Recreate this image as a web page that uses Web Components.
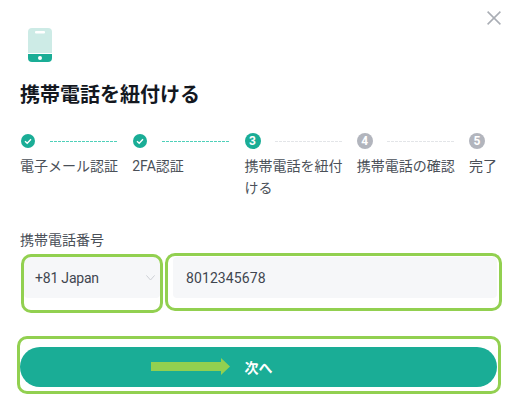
<!DOCTYPE html>
<html lang="ja">
<head>
<meta charset="utf-8">
<style>
  html, body { margin: 0; background: #fff; }
  body { font-family: "Roboto", "Noto Sans CJK JP", sans-serif; color: #3f4650; }
</style>
</head>
<body>
<bind-phone-dialog></bind-phone-dialog>

<script>
class StepItem extends HTMLElement {
  constructor() {
    super();
    this.attachShadow({ mode: "open" });
  }

  connectedCallback() {
    const state = this.getAttribute("state");
    const num = this.getAttribute("num");
    const last = this.hasAttribute("last");
    const mark = state === "done"
      ? `<svg width="14" height="14" viewBox="0 0 14 14"><circle cx="7" cy="7" r="7" fill="#1aad96"/><path d="M4 7.2l2.2 2.1L10 5.3" fill="none" stroke="#fff" stroke-width="1.4"/></svg>`
      : `<span class="num">${num}</span>`;

    this.shadowRoot.innerHTML = `
      <style>
        :host { display: block; width: 112.25px; flex: none; }
        .head { display: flex; align-items: center; height: 16px; gap: 8px; }
        .icon { width: 16px; height: 16px; flex: none; display: flex; align-items: center; justify-content: center; }
        .num {
          width: 16px; height: 16px; border-radius: 50%;
          display: flex; align-items: center; justify-content: center;
          font: 700 12px/16px "Roboto", sans-serif; color: #fff;
          background: #b2b5bd;
        }
        :host([state="active"]) .num { background: #1aad96; }
        .line {
          width: 68px; height: 1px; margin-left: 6px;
          background: repeating-linear-gradient(90deg, #e3e5e8 0 3px, transparent 3px 4px);
        }
        :host([state="done"]) .line {
          background: repeating-linear-gradient(90deg, #4fd0ba 0 3px, transparent 3px 4px);
        }
        .label { margin-top: 6px; width: 100px; font-size: 14px; line-height: 22px; color: #4a5058; }
      </style>
      <div class="head">
        <div class="icon">${mark}</div>
        ${last ? "" : `<div class="line"></div>`}
      </div>
      <div class="label"><slot></slot></div>
    `;
  }
}

class PhoneField extends HTMLElement {
  constructor() {
    super();
    this.attachShadow({ mode: "open" });
  }

  connectedCallback() {
    const chevron = this.hasAttribute("select")
      ? `<svg width="9" height="6" viewBox="0 0 9 6"><path d="M.4.4l4.1 4.6L8.6.4" fill="none" stroke="#cdd0d5" stroke-width="1"/></svg>`
      : "";
    this.shadowRoot.innerHTML = `
      <style>
        :host {
          display: flex; align-items: center; justify-content: space-between;
          height: 41px; box-sizing: border-box; padding: 0 5px 0 11px;
          background: #f6f7f9; border-radius: 4px;
          font-size: 14px; color: #3f4650; letter-spacing: -.2px;
        }
        :host(:not([select])) { padding-left: 13px; letter-spacing: .1px; }
      </style>
      <span><slot></slot></span>${chevron}
    `;
  }
}

class NextButton extends HTMLElement {
  constructor() {
    super();
    this.attachShadow({ mode: "open" });
  }

  connectedCallback() {
    this.shadowRoot.innerHTML = `
      <style>
        :host {
          display: flex; align-items: center; justify-content: center;
          height: 40px; border-radius: 20px; background: #1aad96;
          color: #fff; font-size: 14px; font-weight: 700;
        }
      </style>
      <slot></slot>
    `;
  }
}

class BindPhoneDialog extends HTMLElement {
  constructor() {
    super();
    this.attachShadow({ mode: "open" });
  }

  connectedCallback() {
    this.shadowRoot.innerHTML = `
      <style>
        :host { display: block; position: relative; width: 520px; height: 406px; overflow: hidden; box-sizing: border-box; padding: 28px 23px 0 20px; }
        .close { position: absolute; left: 487px; top: 11px; }
        .phone { display: block; margin-left: 8px; }
        h2 { margin: 19px 0 0; font-size: 20px; line-height: 28px; font-weight: 700; color: #14181f; }
        .steps { display: flex; margin-top: 24px; height: 70px; }
        .field-label { margin-top: 27px; font-size: 14px; line-height: 20px; color: #4a5058; }
        .fields { display: flex; gap: 13px; margin-top: 7px; padding-left: 4px; }
        .fields phone-field:first-child { width: 136px; flex: none; }
        .fields phone-field:last-child { flex: 1; }
        next-button { margin-top: 49px; }
        .box { position: absolute; box-sizing: border-box; border: 3px solid #92d050; border-radius: 10px; }
        .arrow { position: absolute; left: 151px; top: 358px; }
      </style>
      <svg class="close" width="14" height="14" viewBox="0 0 14 14"><path d="M.6.6l12.8 12.8M13.4.6L.6 13.4" stroke="#a9adb4" stroke-width="1.5" fill="none"/></svg>
      <svg class="phone" width="24" height="34" viewBox="0 0 24 34">
        <path d="M4 0h16a4 4 0 0 1 4 4v21H0V4a4 4 0 0 1 4-4z" fill="#cdebe6"/>
        <rect x="7" y="3" width="10" height="2.5" rx="1" fill="#fff"/>
        <path d="M0 26h24v4a4 4 0 0 1-4 4H4a4 4 0 0 1-4-4z" fill="#1aad96"/>
        <circle cx="12" cy="30" r="2" fill="#fff"/>
      </svg>
      <h2>携帯電話を紐付ける</h2>
      <div class="steps">
        <step-item state="done">電子メール認証</step-item>
        <step-item state="done">2FA認証</step-item>
        <step-item state="active" num="3">携帯電話を紐付ける</step-item>
        <step-item state="todo" num="4">携帯電話の確認</step-item>
        <step-item state="todo" num="5" last>完了</step-item>
      </div>
      <div class="field-label">携帯電話番号</div>
      <div class="fields">
        <phone-field select>+81 Japan</phone-field>
        <phone-field>8012345678</phone-field>
      </div>
      <next-button>次へ</next-button>

      <div class="box" style="left:21px;top:254px;width:142px;height:59px"></div>
      <div class="box" style="left:165px;top:253px;width:337px;height:58px"></div>
      <div class="box" style="left:17px;top:336px;width:484px;height:58px"></div>
      <svg class="arrow" width="79" height="17" viewBox="0 0 79 17"><path d="M0 4h70V0l9 8.5L70 17v-4H0z" fill="#92d050"/></svg>
    `;
  }
}

customElements.define("step-item", StepItem);
customElements.define("phone-field", PhoneField);
customElements.define("next-button", NextButton);
customElements.define("bind-phone-dialog", BindPhoneDialog);
</script>
</body>
</html>
